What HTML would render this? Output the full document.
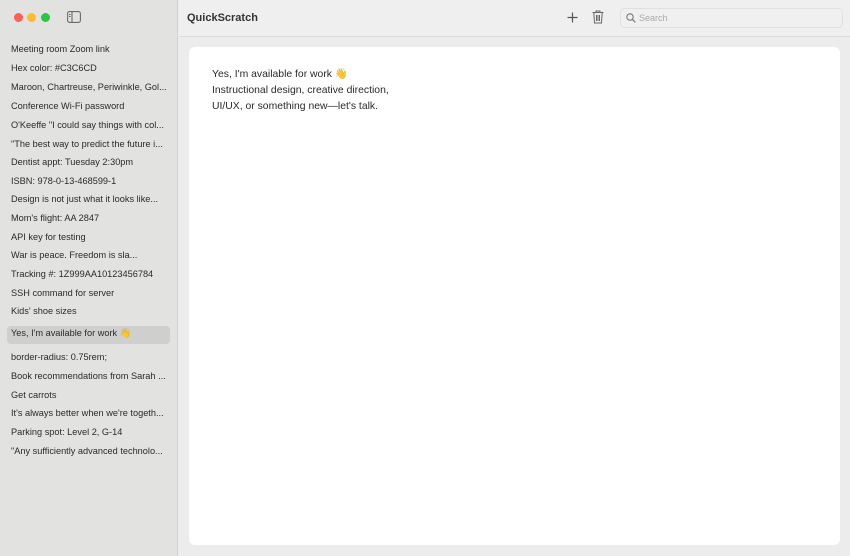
<!DOCTYPE html>
<html><head><meta charset="utf-8"><style>
*{margin:0;padding:0;box-sizing:border-box}
body{width:850px;height:556px;overflow:hidden;font-family:"Liberation Sans",sans-serif;background:#ececec;position:relative}
#sb{position:absolute;left:0;top:0;width:178px;height:556px;background:#e2e2e0;border-right:1px solid #d2d2d0}
.dot{position:absolute;top:13px;width:9px;height:9px;border-radius:50%}
.it{position:absolute;left:11px;font-size:9.2px;color:#2a2a2a;white-space:nowrap;line-height:12px;margin-top:1px}
#sel{position:absolute;left:7px;top:326px;width:163px;height:18px;background:#cfcfcd;border-radius:4px}
#hd{position:absolute;left:179px;top:0;right:0;height:37px;border-bottom:1px solid #dadada;background:#efefef}
#card{position:absolute;left:189px;top:47px;width:651px;height:498px;background:#fff;border-radius:6px}
</style></head><body>
<div id="sb">
<div class="dot" style="left:14px;background:#fe5f57"></div>
<div class="dot" style="left:27px;background:#febc2e"></div>
<div class="dot" style="left:41px;background:#28c840"></div>
<svg style="position:absolute;left:67px;top:11px" width="14" height="12" viewBox="0 0 14 12"><rect x="0.6" y="0.6" width="12.8" height="10.8" rx="2" fill="none" stroke="#6b6b6b" stroke-width="1.1"/><line x1="5" y1="1" x2="5" y2="11" stroke="#6b6b6b" stroke-width="1.1"/><line x1="2" y1="3.5" x2="3.6" y2="3.5" stroke="#6b6b6b"/><line x1="2" y1="5.5" x2="3.6" y2="5.5" stroke="#6b6b6b"/></svg>
<div id="sel"></div>
<div class="it" style="top:42px">Meeting room Zoom link</div>
<div class="it" style="top:61px">Hex color: #C3C6CD</div>
<div class="it" style="top:80px">Maroon, Chartreuse, Periwinkle, Gol...</div>
<div class="it" style="top:99px">Conference Wi-Fi password</div>
<div class="it" style="top:118px">O'Keeffe "I could say things with col...</div>
<div class="it" style="top:137px">"The best way to predict the future i...</div>
<div class="it" style="top:155px">Dentist appt: Tuesday 2:30pm</div>
<div class="it" style="top:174px">ISBN: 978-0-13-468599-1</div>
<div class="it" style="top:192px">Design is not just what it looks like...</div>
<div class="it" style="top:211px">Mom's flight: AA 2847</div>
<div class="it" style="top:230px">API key for testing</div>
<div class="it" style="top:248px">War is peace. Freedom is sla...</div>
<div class="it" style="top:267px">Tracking #: 1Z999AA10123456784</div>
<div class="it" style="top:286px">SSH command for server</div>
<div class="it" style="top:304px">Kids' shoe sizes</div>
<div class="it" style="top:326px">Yes, I'm available for work 👋</div>
<div class="it" style="top:350px">border-radius: 0.75rem;</div>
<div class="it" style="top:369px">Book recommendations from Sarah ...</div>
<div class="it" style="top:388px">Get carrots</div>
<div class="it" style="top:406px">It's always better when we're togeth...</div>
<div class="it" style="top:425px">Parking spot: Level 2, G-14</div>
<div class="it" style="top:444px">"Any sufficiently advanced technolo...</div>
</div>
<div id="hd">
<div style="position:absolute;left:8px;top:12px;font-size:11px;font-weight:bold;color:#333">QuickScratch</div>
<svg style="position:absolute;left:388px;top:12px" width="11" height="11"><path d="M5.5 0.5V10.5M0.5 5.5H10.5" stroke="#555" stroke-width="1.2"/></svg>
<svg style="position:absolute;left:413px;top:10px" width="12" height="14" viewBox="0 0 12 14"><path d="M0.5 2.5H11.5M4 2.5V1H8V2.5M1.8 2.5L2.5 13H9.5L10.2 2.5M4.5 5V11M6 5V11M7.5 5V11" fill="none" stroke="#666" stroke-width="1"/></svg>
<div style="position:absolute;left:441px;top:8px;width:223px;height:20px;border:1px solid #e0e0e0;border-radius:5px;background:#f0f0f0">
<svg style="position:absolute;left:5px;top:4px" width="10" height="10"><circle cx="4" cy="4" r="3.2" fill="none" stroke="#777" stroke-width="1.1"/><path d="M6.4 6.4L9.3 9.3" stroke="#777" stroke-width="1.2"/></svg>
<div style="position:absolute;left:18px;top:4px;font-size:9px;color:#aaa">Search</div>
</div>
</div>
<div id="card">
<div style="position:absolute;left:23px;top:20px;font-size:10.4px;line-height:16px;color:#2a2a2a">Yes, I'm available for work 👋<br>Instructional design, creative direction,<br>UI/UX, or something new—let's talk.</div>
</div>
</body></html>
